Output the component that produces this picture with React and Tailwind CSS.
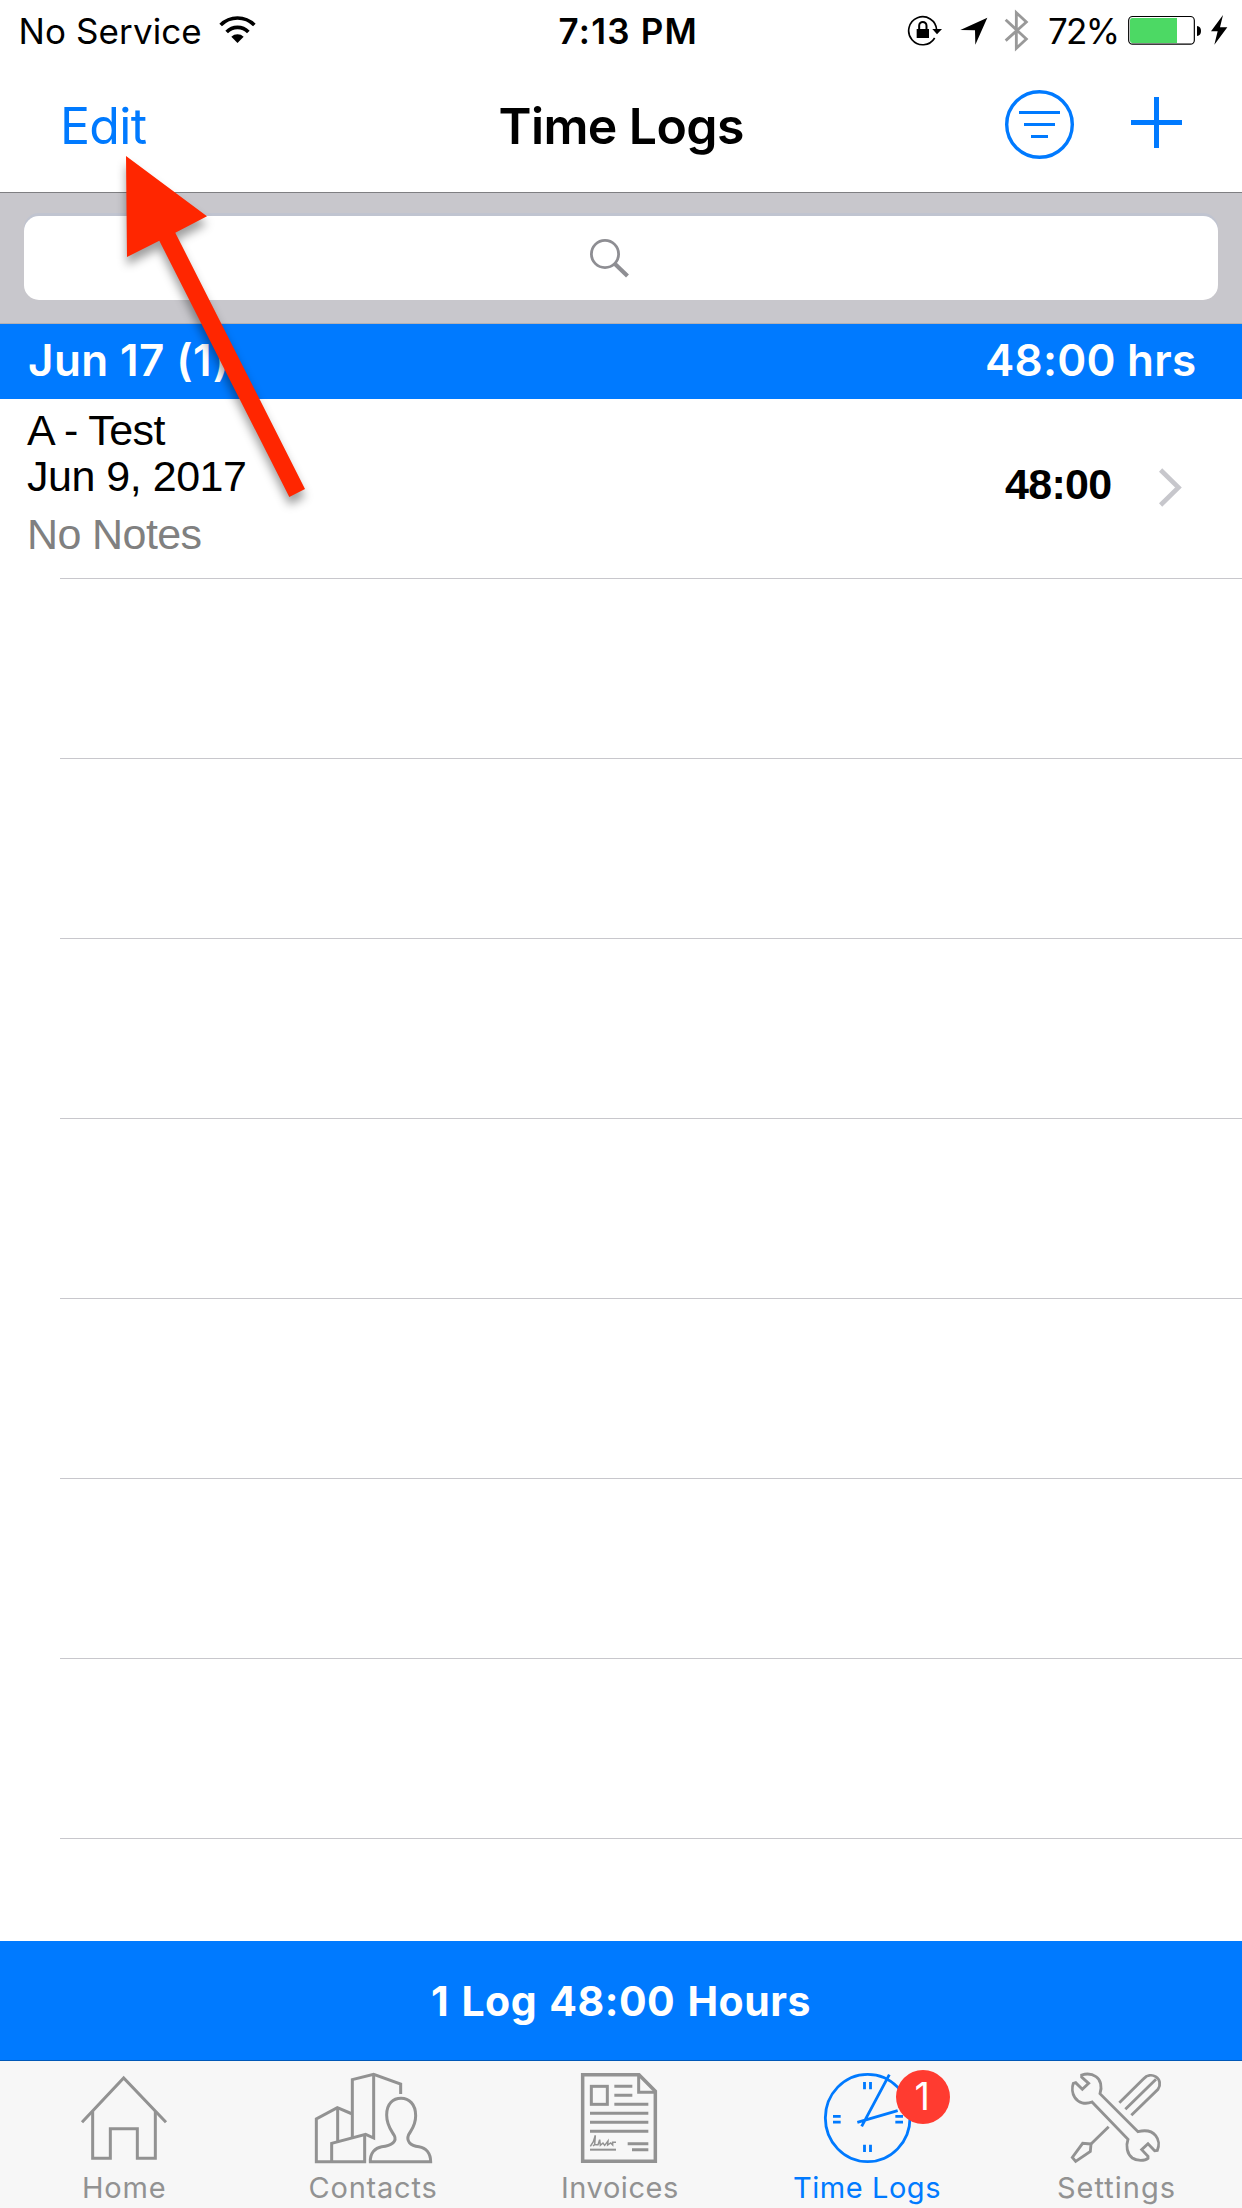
import React from "react";

const INTER = "font-['Inter','Liberation_Sans',sans-serif]";

function StatusBar() {
  return (
    <div className="flex h-[52px] items-start text-[35px] leading-[42px] text-black">
      <span className="mt-[10px] ml-[18.5px] w-[184px] shrink-0 whitespace-nowrap tracking-[0.1px]">No Service</span>
      <svg className="mt-[15px] ml-[16.5px] h-[29px] w-[37px] shrink-0" viewBox="657 45 111 87" fill="none" stroke="#000" strokeWidth="11">
        <path d="M662 75A71 71 0 0 1 763 75" />
        <path d="M680 96A45 45 0 0 1 745 96" />
        <path d="M712.5 129L694 110A27 27 0 0 1 731 110Z" fill="#000" stroke="none" />
      </svg>
      <span className="mt-[10px] ml-[302.5px] w-[140px] shrink-0 whitespace-nowrap font-semibold tracking-[1.25px]">7:13 PM</span>
      <svg className="mt-[12px] ml-[208.5px] h-[36px] w-[36px] shrink-0" viewBox="81 36 108 108" fill="none">
        <path d="M170 90A42 42 0 1 0 164 114" stroke="#000" strokeWidth="5" />
        <path d="M157 87H186L171 103Z" fill="#000" />
        <rect x="110" y="87" width="37" height="27" fill="#000" />
        <path d="M117.500 88V77A11 11 0 0 1 139.500 77V88" stroke="#000" strokeWidth="6" />
      </svg>
      <svg className="mt-[16px] ml-[17px] h-[30px] w-[28px] shrink-0" viewBox="240 48 84 90">
        <path d="M241 90L322 53L286 134L285 91Z" />
      </svg>
      <svg className="mt-[9px] ml-[16px] h-[43px] w-[25px] shrink-0" viewBox="372 27 75 129" fill="none" stroke="#999" strokeWidth="8.500">
        <path d="M377 59L439 117L409 145V38L439 66L377 122" />
      </svg>
      <span className="mt-[10px] ml-[19px] w-[72px] shrink-0 whitespace-nowrap tracking-[-1.7px]">72%</span>
      <svg className="mt-[15px] ml-[7px] h-[31px] w-[75px] shrink-0" viewBox="741 45 225 93">
        <rect x="746" y="49.500" width="197" height="83" rx="12" fill="#fff" stroke="#000" strokeWidth="3.500" />
        <path d="M757 54H891V129H757Q750 129 750 122V61Q750 54 757 54Z" fill="#4cd964" />
        <path d="M951 78Q963 80 963 93T951 108Z" />
      </svg>
      <svg className="mt-[14px] ml-[8px] h-[32px] w-[18px] shrink-0" viewBox="990 42 54 96">
        <path d="M1029 45L993 94H1013L1003 134L1042 82H1020Z" />
      </svg>
    </div>
  );
}

function NavBar() {
  return (
    <div className="flex h-[140px] items-start text-[50px] leading-[60px]">
      <span className="mt-[44px] ml-[60px] w-[90.5px] shrink-0 tracking-[-0.7px] text-[#007aff]">Edit</span>
      <h1 className="mt-[44px] ml-[348px] w-[260px] shrink-0 whitespace-nowrap font-semibold tracking-[-0.6px] text-black">Time Logs</h1>
      <svg className="mt-[38px] ml-[246.5px] h-[69px] w-[69px] shrink-0" viewBox="0 0 69 69" fill="#007aff">
        <circle cx="34.500" cy="34.500" r="32.800" fill="none" stroke="#007aff" strokeWidth="3.400" />
        <rect x="14" y="21" width="41" height="3" />
        <rect x="19" y="33" width="31" height="3" />
        <rect x="26" y="45" width="17" height="3" />
      </svg>
      <svg className="mt-[45px] ml-[57px] h-[51px] w-[51px] shrink-0" viewBox="0 0 51 51" fill="#007aff">
        <rect x="23" y="0" width="5" height="51" />
        <rect x="0" y="23" width="51" height="5" />
      </svg>
    </div>
  );
}

function SearchBar() {
  return (
    <div className="h-[131px] border-b border-[#b2b1b6] bg-[#c8c7cc] px-[24px] pt-[23px]">
      <div className="h-[84px] rounded-[15px] bg-white pl-[565px] pt-[22px] shadow-[0_-3px_0_#c0c4d0]">
        <svg className="h-[40px] w-[42px]" viewBox="589 238 42 40" fill="none" stroke="#8e8e93">
          <circle cx="605" cy="254" r="13.600" strokeWidth="2.800" />
          <path d="M614.500 263.500L627.500 276" strokeWidth="4.200" />
        </svg>
      </div>
    </div>
  );
}

function LogRow() {
  return (
    <div className="flex h-[179px] items-start font-['Liberation_Sans',Arial,sans-serif] text-[43px] leading-[46px]">
      <div className="ml-[27px] w-[978px] shrink-0 pt-[8px] text-black">
        <div className="tracking-[-0.6px]">A - Test</div>
        <div className="tracking-[-0.48px]">Jun 9, 2017</div>
        <div className="mt-[12px] tracking-[-0.6px] text-[#808080]">No Notes</div>
      </div>
      <div className="mt-[61px] w-[154px] shrink-0 font-bold leading-[48px] tracking-[-0.7px] text-black">48:00</div>
      <svg className="mt-[69px] h-[39px] w-[23px] shrink-0" viewBox="0 0 23 39" fill="none" stroke="#c7c7cc" strokeWidth="4.600">
        <path d="M1.600 2L19.500 19.500L1.600 37" />
      </svg>
    </div>
  );
}

function HomeIcon() {
  return (
    <svg className="h-[102px] w-full" viewBox="0 54 744 306" fill="none" stroke="#929292" strokeWidth="9">
      <path d="M246 217L371 84L498 217" />
      <path d="M278 184V325H331V236H412V325H466V184" />
    </svg>
  );
}

function ContactsIcon() {
  return (
    <svg className="h-[102px] w-full" viewBox="-96 54 747 306" fill="none" stroke="#929292" strokeWidth="9">
      <path d="M217 192L172 173L109 207V335H254V253" />
      <path d="M173 173V273M155 335V280L257 253L281 264V73" />
      <path d="M217 263V89L281 73L362 102V132" />
      <path d="M271 335C270 310 285 293 305 290C337 288 351 273 343 257C335 242 320 228 320 195C320 160 340 145 363 145C387 145 407 162 407 197C407 228 393 240 386 254C378 273 390 287 417 290C438 293 452 310 452 335Z" />
    </svg>
  );
}

function InvoicesIcon() {
  return (
    <svg className="h-[102px] w-full" viewBox="-99 54 744 306" fill="none" stroke="#929292" strokeWidth="9">
      <path d="M158 74H327L376 124V334H158Z" strokeWidth="10.500" />
      <path d="M326 74V127H376" />
      <rect x="184" y="109" width="48" height="54" />
      <path d="M253 109H307M253 136H307M253 163H355M180 190H355M180 217H355M180 244H355M293 281H355M306 299H355" />
      <path d="M180 299H258" strokeWidth="6" />
      <path d="M181 289L190 275L196 256L194 284L189 288M196 284H204L209 269L211 286L219 279L224 286L234 273L233 285L242 279L248 285V277H258" strokeWidth="4.500" />
    </svg>
  );
}

function ClockIcon() {
  return (
    <svg className="h-[102px] w-full" viewBox="-75 54 747 306" fill="none" stroke="#007aff" strokeWidth="8.500">
      <ellipse cx="293" cy="204" rx="127" ry="131" />
      <path d="M358 74L275 229M383 182L262 217" />
      <path d="M283.500 96V118M301.500 96V118M283.500 284V306M301.500 284V306M189 199H212M189 216.500H212M376 199H399M376 216.500H399" />
    </svg>
  );
}

function SettingsIcon() {
  return (
    <svg className="h-[102px] w-full" viewBox="-108 54 744 306" fill="none" stroke="#929292" strokeWidth="8.500">
      <path d="M210 131C217 110 212 89 198 80C185 71 168 71 155 75V81L176 100L157 118L137 98L130 100C125 113 127 131 134 142C144 159 166 164 186 156L294 268C287 288 291 312 307 324C321 334 345 333 354 325V319L335 299L354 281L374 302L382 301C388 287 387 269 377 257C365 242 344 240 324 245Z" />
      <path d="M268 158L340 87C351 75 366 73 377 80C390 88 393 104 384 118L304 196" />
      <path d="M286 178L378 88M236 230L183 282" />
      <path d="M183 282L158 280L127 322L137 334L181 304Z" />
    </svg>
  );
}

const tabs = [
  { label: "Home", Icon: HomeIcon, text: "pl-[82px] tracking-[0.8px] text-[#929292]" },
  { label: "Contacts", Icon: ContactsIcon, text: "pl-[60.5px] tracking-[0.8px] text-[#929292]" },
  { label: "Invoices", Icon: InvoicesIcon, text: "pl-[64px] tracking-[0.55px] text-[#929292]" },
  { label: "Time Logs", Icon: ClockIcon, text: "pl-[48px] tracking-[0.55px] text-[#007aff]", badge: "1" },
  { label: "Settings", Icon: SettingsIcon, text: "pl-[63px] tracking-[1px] text-[#929292]" },
];

function TabBar() {
  return (
    <nav className="grid h-[147px] grid-cols-[248px_249px_248px_249px_248px] bg-[#f7f7f7]">
      {tabs.map(({ label, Icon, text, badge }) => (
        <div key={label} className="relative pt-[7px]">
          <Icon />
          <div className={`whitespace-nowrap text-[29px] leading-[35px] ${text}`}>{label}</div>
          {badge && (
            <span className="absolute left-[151px] top-[9px] h-[54px] w-[54px] rounded-full bg-[#ff3b30] pl-[18.5px] pt-[3px] text-[38px] leading-[46px] text-white">
              {badge}
            </span>
          )}
        </div>
      ))}
    </nav>
  );
}

function PointerArrow() {
  return (
    <svg
      className="pointer-events-none absolute left-[100px] top-[140px] h-[400px] w-[230px] drop-shadow-[0_8px_5px_rgba(0,0,0,0.38)]"
      viewBox="100 140 230 400"
    >
      <path d="M126 156L207 216.300L175.300 232.700L305 489L289.300 497L159.300 240.700L127 257Z" fill="#ff2600" />
    </svg>
  );
}

export default function App() {
  return (
    <div className={`relative flex h-[2208px] w-[1242px] flex-col overflow-hidden bg-white ${INTER}`}>
      <header className="h-[193px] shrink-0 border-b border-[#7f7f82] bg-white">
        <StatusBar />
        <NavBar />
      </header>
      <SearchBar />
      <div className="flex h-[75px] shrink-0 bg-[#007aff] pt-[9px] text-[44px] font-semibold leading-[54px] text-white">
        <span className="ml-[28px] w-[957px] tracking-[0.4px]">Jun 17 (1)</span>
        <span className="whitespace-nowrap tracking-[0.24px]">48:00 hrs</span>
      </div>
      <main className="h-[1542px] shrink-0 overflow-hidden">
        <LogRow />
        {Array.from({ length: 8 }, (_, i) => (
          <div key={i} className="mb-[179px] ml-[60px] h-px bg-[#c8c7cc]" />
        ))}
      </main>
      <footer className="h-[120px] shrink-0 border-b border-[#0058b8] bg-[#007aff] pl-[431px] pt-[35px] text-[41px] font-bold leading-[50px] tracking-[0.5px] [word-spacing:2px] text-white">
        1 Log 48:00 Hours
      </footer>
      <TabBar />
      <PointerArrow />
    </div>
  );
}
